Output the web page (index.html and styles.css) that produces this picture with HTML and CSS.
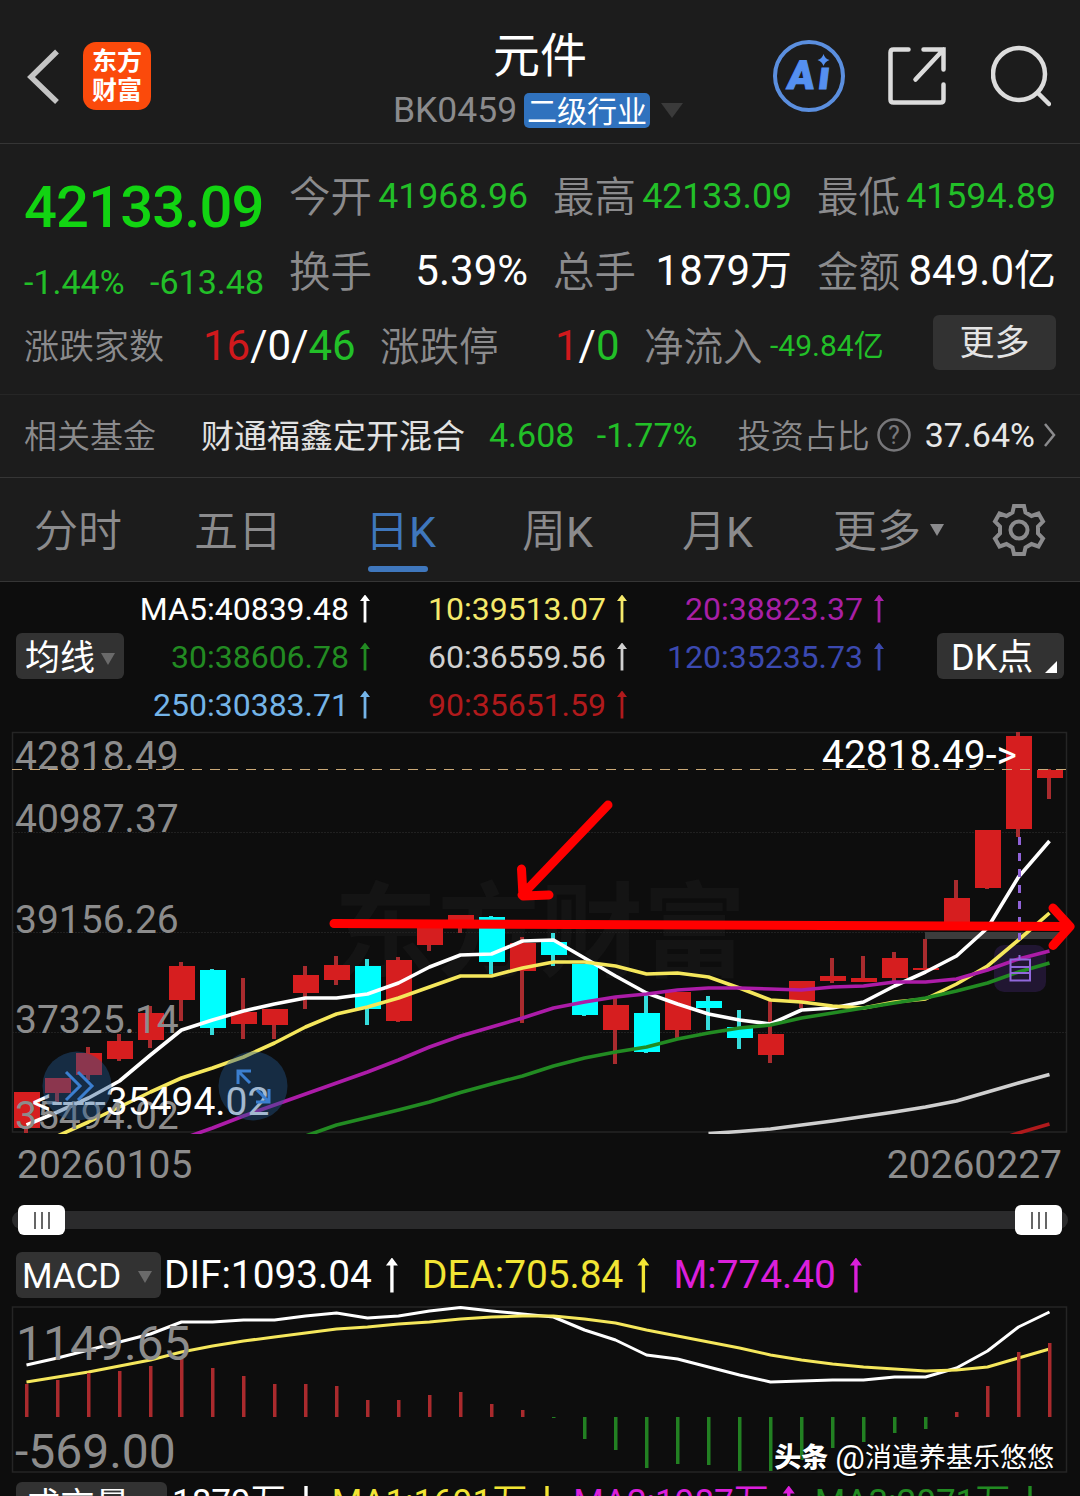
FILE: index.html
```html
<!DOCTYPE html>
<html lang="zh-CN">
<head>
    <meta charset="UTF-8">
    <meta name="viewport" content="width=device-width, initial-scale=1.0">
    <title>元件 BK0459</title>
    <link rel="stylesheet" href="styles.css">
</head>
<body>
    <div class="app">
        <header class="header">
            <div class="header-left">
                <svg class="back" width="34" height="58" viewBox="0 0 34 58"><path d="M30 4.500 4 30l26 25"/></svg>
                <div class="logo"><span>东方</span><span>财富</span></div>
            </div>
            <div class="header-title">
                <h1>元件</h1>
                <div class="subtitle">
                    <span class="code">BK0459</span>
                    <span class="badge">二级行业</span>
                    <i class="caret caret-title"></i>
                </div>
            </div>
            <div class="header-right">
                <svg width="72" height="72" viewBox="0 0 72 72">
                    <circle cx="36" cy="36" r="34" fill="none" stroke="#5b8fdf" stroke-width="4"/>
                    <text x="19" y="49" class="ai-text">A<tspan x="50">ı</tspan></text>
                    <path d="M50.500 14q1.500 5 6 6-4.500 1.500-6 6-1.500-4.500-6-6 4.500-1 6-6z" fill="#5590f0"/>
                </svg>
                <svg class="line-icon" width="60" height="60" viewBox="0.500 -0.500 60 60"><path d="M21 3H6Q3 3 3 6v47q0 3 3 3h47q3 0 3-3V38M36 3h20v20M56 3 28 33"/></svg>
                <svg class="line-icon" width="60" height="62" viewBox="0 0 60 62"><circle cx="28" cy="29" r="26"/><path d="m47 48 11 11"/></svg>
            </div>
        </header>

        <section class="quote">
            <div class="quote-top">
                <div class="price-box">
                    <div class="price">42133.09</div>
                    <div class="change"><span>-1.44%</span><span>-613.48</span></div>
                </div>
                <div class="stats">
                    <div class="stat"><label>今开</label><b class="green">41968.96</b></div>
                    <div class="stat"><label>最高</label><b class="green">42133.09</b></div>
                    <div class="stat"><label>最低</label><b class="green">41594.89</b></div>
                    <div class="stat big"><label>换手</label><b>5.39%</b></div>
                    <div class="stat big"><label>总手</label><b>1879万</b></div>
                    <div class="stat big"><label>金额</label><b>849.0亿</b></div>
                </div>
            </div>
            <div class="breadth">
                <label class="l1">涨跌家数</label>
                <span class="n1"><span class="red">16</span>/0/<span class="green">46</span></span>
                <label class="l2">涨跌停</label>
                <span class="n2"><span class="red">1</span>/<span class="green">0</span></span>
                <label class="l3">净流入</label>
                <span class="flow green">-49.84亿</span>
                <button class="more">更多</button>
            </div>
        </section>

        <section class="fund">
            <label>相关基金</label>
            <span class="fund-name">财通福鑫定开混合</span>
            <span class="fund-value green">4.608</span>
            <span class="fund-change green">-1.77%</span>
            <label>投资占比</label>
            <svg class="help" width="34" height="34" viewBox="0 0 34 34"><circle cx="17" cy="17" r="15.500"/><text x="17" y="25.500">?</text></svg>
            <span class="ratio">37.64%</span>
            <svg class="arrow-right" width="12" height="26" viewBox="0 0 12 26"><path d="m1 2 9 11-9 11"/></svg>
        </section>

        <nav class="tabs">
            <a>分时</a>
            <a>五日</a>
            <a class="active">日<b>K</b></a>
            <a>周<b>K</b></a>
            <a>月<b>K</b></a>
            <a>更多<i class="caret caret-tab"></i></a>
            <svg class="gear" width="54" height="54" viewBox="0 0 54 54">
                <path d="M22 3h10l1.500 6.500 6 3.500 7-2.500 4.500 8-5 5v7l5 5-4.500 8-7-2.500-6 3.500L32 51H22l-1.500-6.500-6-3.500-7 2.500-4.500-8 5-5v-7l-5-5 4.500-8 7 2.500 6-3.500z"/>
                <circle cx="27" cy="27" r="8.500"/>
            </svg>
        </nav>

        <section class="ma">
            <button class="chip">均线<i class="caret"></i></button>
            <div class="ma-grid">
                <span class="up">MA5:40839.48</span>
                <span class="up yellow">10:39513.07</span>
                <span class="up purple">20:38823.37</span>
                <span class="up dgreen">30:38606.78</span>
                <span class="up silver">60:36559.56</span>
                <span class="up blue">120:35235.73</span>
                <span class="up sky">250:30383.71</span>
                <span class="up dred">90:35651.59</span>
            </div>
            <button class="chip chip-dk">DK点<i class="corner"></i></button>
        </section>

        <svg class="chart" id="kline" width="1080" height="404" viewBox="0 730 1080 404">
            <text class="watermark" x="334" y="969">东方财富</text>
            <path class="grid" d="M12 832.500h1055M12 932.500h1055M12 1032.500h1055"/>
            <rect class="frame" x="12.500" y="732.500" width="1054" height="399.500"/>
            <path d="M925 932h137v7H925z" fill="#3c3c3c"/>
            <g id="candles"></g>
            <rect x="994" y="945" width="52" height="47" rx="10" fill="#3a2260" fill-opacity=".45"/>
            <g id="averages"></g>
            <path class="price-line" d="M12 769.500h1055"/>
            <path class="event-line" d="M1019.500 837v103"/>
            <path class="event-icon" d="M1010.500 959.500h19.500v21h-19.500zM1010.500 967h19.500M1010.500 973h19.500M1019.500 955v4"/>
            <g class="axis">
                <text x="15" y="769">42818.49</text>
                <text x="15" y="832">40987.37</text>
                <text x="15" y="933">39156.26</text>
                <text x="15" y="1033">37325.14</text>
                <text x="15" y="1129">35494.02</text>
            </g>
            <g class="extreme">
                <text x="822" y="768">42818.49-&gt;</text>
                <text x="32" y="1115">&lt;-----35494.02</text>
            </g>
            <circle cx="77" cy="1086" r="34.500" class="round"/>
            <circle cx="253" cy="1086" r="34.500" class="round"/>
            <path class="round-icon" d="m66 1072 14 14-14 14M78 1072l14 14-14 14M238 1084v-13h13M238 1071l12 12M269 1089v13h-13M269 1102l-12-12"/>
            <g class="marker">
                <path d="M334 923.500 1069 926.500M1053 908l17 18.500-17 19"/>
                <path d="M608 805 522 895M521.500 869l1.500 27 26-1"/>
            </g>
        </svg>

        <div class="dates"><span>20260105</span><span>20260227</span></div>

        <div class="slider">
            <div class="handle"><i></i><i></i><i></i></div>
            <div class="handle"><i></i><i></i><i></i></div>
        </div>

        <div class="indicator">
            <button class="chip">MACD<i class="caret"></i></button>
            <span class="up">DIF:1093.04</span>
            <span class="up bright-yellow">DEA:705.84</span>
            <span class="up magenta">M:774.40</span>
        </div>

        <svg class="chart" width="1080" height="168" viewBox="0 1306 1080 168">
            <rect class="frame" x="12.500" y="1307" width="1054" height="165"/>
            <g id="macd"></g>
            <g class="axis axis-big">
                <text x="16" y="1360">1149.65</text>
                <text x="15" y="1467.500">-569.00</text>
            </g>
        </svg>

        <div class="indicator volume">
            <button class="chip">成交量<i class="caret"></i></button>
            <span class="down">1879万</span>
            <span class="down bright-yellow">MA1:1691万</span>
            <span class="up magenta">MA2:1987万</span>
            <span class="down dgreen">MA3:2071万</span>
        </div>

        <div class="credit"><b>头条</b><span class="at">@</span>消遣养基乐悠悠</div>
    </div>

    <script>
        const STEP = 31;
        const START = 27;
        const SVG = 'http://www.w3.org/2000/svg';

        // [body top, body bottom, high, low, 1 = falling]
        const candles = [
            [1092, 1128, 1092, 1133], [1078, 1093, 1078, 1102], [1053, 1075, 1047, 1080],
            [1041, 1059, 1034, 1061], [1013, 1040, 1006, 1048], [966, 1000, 962, 1021],
            [970, 1028, 969, 1035, 1], [1012, 1024, 978, 1039], [1009, 1025, 1009, 1039],
            [975, 993, 966, 1009], [965, 980, 956, 985], [966, 1009, 959, 1025, 1],
            [960, 1021, 957, 1022], [922, 945, 922, 951], [915, 926, 915, 933],
            [917, 962, 916, 974, 1], [943, 971, 937, 1023], [942, 955, 933, 966, 1],
            [964, 1015, 964, 1016, 1], [1005, 1030, 998, 1064], [1013, 1052, 993, 1053, 1],
            [992, 1030, 992, 1038], [1001, 1008, 996, 1030, 1], [1027, 1038, 1010, 1049, 1],
            [1034, 1055, 1001, 1063], [981, 1001, 981, 1008], [976, 981, 958, 983],
            [978, 982, 956, 982], [958, 978, 952, 981], [968, 970, 939, 970],
            [898, 924, 880, 924], [830, 888, 830, 889], [736, 829, 732, 837],
            [770, 778, 769, 799]
        ];

        // moving averages, each one ends on the last day
        const ma5 = [1125, 1112, 1098, 1081, 1055, 1030, 1020, 1011, 1004, 998, 998, 994, 983, 967, 955, 954, 941, 940, 958, 976, 993, 1004, 1014, 1020, 1024, 1010, 1008, 1002, 986, 972, 956, 928, 877, 841];
        const ma10 = [1150, 1136, 1122, 1107, 1092, 1078, 1068, 1057, 1043, 1027, 1014, 1007, 998, 987, 976, 976, 968, 962, 962, 966, 974, 973, 977, 988, 1000, 1002, 1006, 1008, 1002, 999, 984, 966, 940, 913];
        const ma20 = [1192, 1181, 1170, 1160, 1149, 1139, 1128, 1116, 1105, 1094, 1083, 1072, 1060, 1047, 1036, 1027, 1018, 1008, 1002, 997, 994, 990, 988, 988, 989, 990, 987, 986, 982, 982, 979, 970, 959, 951];
        const ma30 = [1228, 1218, 1207, 1197, 1187, 1177, 1167, 1156, 1146, 1136, 1125, 1117.5, 1110, 1102, 1092.500, 1084, 1076, 1066, 1058, 1052, 1047, 1039, 1033, 1028, 1025, 1018, 1013, 1008, 1003, 998, 991, 983, 972, 963];
        const ma60 = [1133.500, 1131.500, 1129, 1125, 1121, 1116.500, 1112, 1107, 1101, 1092, 1083, 1074.500];
        const ma90 = [1143, 1133, 1124];

        const dif = [1365, 1358, 1350, 1342, 1334, 1322, 1322, 1320, 1320, 1316, 1313, 1318, 1316, 1311, 1307.500, 1311, 1314, 1317, 1330, 1340, 1355, 1359, 1367, 1375, 1382, 1381, 1380, 1380, 1377, 1377, 1368, 1351, 1327, 1312];
        const dea = [1382, 1377, 1372, 1366, 1360, 1352, 1346, 1341, 1337, 1333, 1329, 1327, 1324, 1322, 1319, 1317, 1316, 1316, 1319, 1323, 1330, 1336, 1342, 1348, 1355, 1360, 1364, 1367, 1369, 1371, 1370, 1367, 1358, 1349];
        const bars = [1384, 1380, 1373, 1371, 1366, 1359, 1368, 1376, 1384, 1384, 1386, 1400, 1400, 1395, 1392, 1404, 1410, 1418, 1439, 1450, 1468, 1464, 1465, 1471, 1471, 1460, 1448, 1442, 1433, 1429, 1412, 1386, 1352, 1343];
        const ZERO = 1417;

        function add(parent, name, attrs) {
            const el = document.createElementNS(SVG, name);
            for (const key in attrs) {
                el.setAttribute(key, attrs[key]);
            }
            parent.appendChild(el);
        }

        function line(parent, values, className) {
            const first = 34 - values.length;
            const points = values.map((y, i) => (START - 0.5 + (first + i) * STEP) + ',' + y).join(' ');
            add(parent, 'polyline', { points: points, class: className });
        }

        const candleGroup = document.getElementById('candles');
        candles.forEach(function([top, bottom, high, low, falling], i) {
            const x = START + i * STEP;
            const name = falling ? 'fall' : 'rise';
            add(candleGroup, 'rect', { x: x - 3, y: high, width: 4, height: low - high, class: name + ' wick' });
            add(candleGroup, 'rect', { x: x - 13, y: top, width: 26, height: bottom - top, class: name });
        });

        const averages = document.getElementById('averages');
        line(averages, ma5, 'line-white');
        line(averages, ma10, 'line-yellow');
        line(averages, ma20, 'line-purple');
        line(averages, ma30, 'line-green');
        line(averages, ma60, 'line-silver');
        line(averages, ma90, 'line-red');

        const macd = document.getElementById('macd');
        line(macd, dif, 'line-white thin');
        line(macd, dea, 'line-yellow thin');
        bars.forEach(function(y, i) {
            add(macd, 'rect', {
                x: START - 2 + i * STEP,
                y: Math.min(y, ZERO),
                width: 3.5,
                height: Math.abs(y - ZERO),
                class: y < ZERO ? 'bar-up' : 'bar-down'
            });
        });
    </script>
</body>
</html>
```

FILE: styles.css
```css
/* General Styles */
* {
    box-sizing: border-box;
}

body {
    margin: 0;
    background: #0d0d0d;
    color: #fff;
    font-family: Roboto, 'Noto Sans CJK SC', sans-serif;
    line-height: 1.2;
}

.app {
    position: relative;
    width: 1080px;
    height: 1496px;
    overflow: hidden;
    white-space: nowrap;
}

button {
    border: none;
    padding: 0;
    color: #fff;
    font-family: inherit;
}

label {
    color: #8b8b8d;
    font-weight: 350;
}

svg {
    display: block;
    flex: none;
}

.green { color: #22bf28; }
.red { color: #d0191c; }
.yellow { color: #f5e96b; }
.bright-yellow { color: #f2e534; }
.purple { color: #a81fa5; }
.magenta { color: #db1fdb; }
.dgreen { color: #228b22; }
.silver { color: #d0d0d0; }
.blue { color: #3b49b0; }
.sky { color: #74b4e8; }
.dred { color: #b01a1c; }

.caret {
    display: inline-block;
    border: 7px solid transparent;
    border-top: 12px solid #6a6a6a;
    border-bottom: 0;
}

/* Header */
.header {
    display: grid;
    grid-template-columns: 300px 1fr 300px;
    height: 144px;
    background: #1c1c1c;
    border-bottom: 1px solid #353535;
}

.header-left {
    display: flex;
    align-items: center;
    gap: 22px;
    padding: 9px 0 0 27px;
}

.back path {
    fill: none;
    stroke: #c4c4c4;
    stroke-width: 5.5;
}

.logo {
    display: flex;
    flex-direction: column;
    justify-content: center;
    width: 68px;
    height: 68px;
    border-radius: 13px;
    background: #fb4a0b;
    font-size: 25px;
    font-weight: 700;
    line-height: 29px;
    text-align: center;
}

.header-title {
    display: flex;
    flex-direction: column;
    align-items: center;
}

h1 {
    margin: 28px 0 0;
    font-size: 47px;
    font-weight: 400;
    line-height: 56px;
}

.subtitle {
    display: flex;
    align-items: center;
    height: 53px;
    margin-left: -4px;
}

.code {
    color: #8b8b8d;
    font-size: 35.5px;
}

.badge {
    height: 35px;
    margin-left: 7px;
    padding: 0 3px;
    border-radius: 5px;
    background: #3072be;
    font-size: 30px;
    line-height: 37px;
}

.caret-title {
    margin: 0 0 0 11px;
    border-width: 15px 11px 0;
    border-top-color: #3a3a3a;
}

.header-right {
    display: flex;
    align-items: center;
    justify-content: flex-end;
    gap: 43px;
    padding: 9px 29px 0 0;
}

.line-icon {
    fill: none;
    stroke: #dcdcdc;
    stroke-width: 4.5;
    stroke-linecap: round;
}

.ai-text {
    fill: #5590f0;
    stroke: #5590f0;
    stroke-width: 1;
    font-size: 40px;
    font-weight: 900;
    transform: skewX(-7deg);
}

/* Quote */
.quote {
    height: 250px;
    background: #1c1c1c;
}

.quote-top {
    display: flex;
    height: 165px;
    padding-left: 24px;
}

.price-box {
    width: 265px;
}

.price {
    margin-top: 27px;
    color: #12d412;
    font-size: 58px;
    font-weight: 500;
    letter-spacing: -0.9px;
    line-height: 72px;
}

.change {
    display: flex;
    justify-content: space-between;
    width: 240px;
    margin-top: 18px;
    color: #22bf28;
    font-size: 34px;
    line-height: 42px;
}

.stats {
    display: grid;
    grid-template-columns: 239px 239px 239px;
    grid-template-rows: 75px 75px;
    column-gap: 25px;
    margin-top: 15px;
}

.stat {
    display: flex;
    align-items: center;
    justify-content: space-between;
    font-size: 35.7px;
}

.stat label {
    padding-top: 3px;
    font-size: 41.5px;
}

.stat b {
    font-weight: 400;
}

.stat.big {
    font-size: 42px;
}

.breadth {
    display: flex;
    align-items: center;
    height: 72px;
    padding: 2px 0 0 24px;
    font-size: 42px;
}

.breadth label {
    padding-top: 4px;
}

.breadth .l1 {
    width: 179px;
    font-size: 35px;
}

.breadth .n1 {
    width: 177px;
}

.breadth .l2, .breadth .l3 {
    font-size: 39.5px;
}

.breadth .l2 {
    width: 175px;
}

.breadth .n2 {
    width: 89px;
}

.breadth .l3 {
    width: 126px;
}

.flow {
    width: 163px;
    font-size: 30px;
}

.more {
    width: 123px;
    height: 55px;
    margin-top: -7px;
    border-radius: 6px;
    background: #323232;
    color: #e4e4e4;
    font-size: 35px;
    line-height: 58px;
}

/* Related fund */
.fund {
    display: flex;
    align-items: center;
    height: 84px;
    padding: 0 24px 2px;
    background: #1c1c1c;
    border-top: 1px solid #262626;
    border-bottom: 1px solid #353535;
    font-size: 34px;
}

.fund label, .fund-name {
    padding-top: 3px;
    font-size: 33px;
}

.fund-name {
    margin: 0 24px 0 45px;
    color: #e2e2e2;
}

.fund-value {
    width: 108px;
}

.fund-change {
    width: 141px;
}

.help {
    margin: 0 14px 0 7px;
}

.help circle {
    fill: none;
    stroke: #77777a;
    stroke-width: 2.5;
}

.help text {
    fill: #77777a;
    font-size: 25px;
    text-anchor: middle;
}

.ratio {
    color: #e8e8e8;
}

.arrow-right {
    margin-left: 9px;
}

.arrow-right path {
    fill: none;
    stroke: #8b8b8d;
    stroke-width: 2.5;
}

/* Tabs */
.tabs {
    display: grid;
    grid-template-columns: 160px 171px 157px 160px 151px 159px 54px;
    align-items: center;
    height: 104px;
    padding-left: 34px;
    background: #1c1c1c;
    border-bottom: 1px solid #353535;
    color: #8b8b8d;
    font-size: 44px;
    font-weight: 350;
}

.tabs a {
    padding-top: 5px;
    line-height: 64px;
}

.tabs b {
    font-size: 43px;
    font-weight: 400;
}

.tabs .active {
    position: relative;
    color: #3f77bd;
}

.tabs .active::after {
    content: '';
    position: absolute;
    left: 3px;
    bottom: -8px;
    width: 60px;
    height: 6px;
    border-radius: 3px;
    background: #3f77bd;
}

.caret-tab {
    margin-left: 9px;
    border-top-color: #8b8b8d;
    vertical-align: 11px;
}

.gear {
    fill: none;
    stroke: #8b8b8d;
    stroke-width: 4;
}

/* Moving averages */
.ma {
    display: flex;
    align-items: center;
    height: 148px;
    padding: 0 16px;
}

.chip {
    display: flex;
    align-items: center;
    justify-content: space-between;
    width: 108px;
    height: 46px;
    padding: 5px 9px 0;
    border-radius: 6px;
    background: #323232;
    font-size: 35px;
    line-height: 46px;
}

.chip-dk {
    position: relative;
    width: 127px;
    margin-left: auto;
    padding-top: 3px;
    padding-left: 14px;
    font-size: 36px;
}

.corner {
    position: absolute;
    right: 7px;
    bottom: 6px;
    border-left: 12px solid transparent;
    border-bottom: 12px solid #fff;
}

.ma-grid {
    display: grid;
    grid-template-columns: 246px 257px 257px;
    grid-auto-rows: 48px;
    padding-top: 1px;
    font-size: 32px;
    line-height: 48px;
}

.ma-grid span {
    display: flex;
    align-items: center;
    justify-content: flex-end;
}

/* Thin arrow after a value */
.up::after, .down::after {
    content: '';
    flex: none;
    width: 10px;
    height: 28px;
    margin-left: 11px;
    background: currentColor;
    clip-path: polygon(50% 0, 100% 23%, 64% 23%, 64% 100%, 36% 100%, 36% 23%, 0 23%);
}

.down::after {
    transform: rotate(180deg);
}

/* Charts */
.frame {
    fill: none;
    stroke: #252525;
    stroke-width: 1.5;
}

.grid {
    stroke: #202020;
    stroke-dasharray: 2 1;
}

.watermark {
    fill: #141414;
    font-size: 103px;
    font-weight: 700;
}

.rise { fill: #d61e1f; }
.rise.wick { fill: #a92b2e; }
.fall { fill: #00ffff; }
.fall.wick { fill: #36dcdc; }

polyline {
    fill: none;
    stroke-width: 3.6;
    stroke-linejoin: round;
}

.thin { stroke-width: 3; }
.line-white { stroke: #fff; }
.line-yellow { stroke: #f5e75c; }
.line-purple { stroke: #ac1ca8; }
.line-green { stroke: #228b22; }
.line-silver { stroke: #cfcfcf; }
.line-red { stroke: #b01a1c; }
.bar-up { fill: #aa2a2d; }
.bar-down { fill: #228022; }

.price-line {
    stroke: #cba978;
    stroke-width: 1.2;
    stroke-dasharray: 10 8;
}

.event-line {
    stroke: #9163d8;
    stroke-width: 3;
    stroke-dasharray: 8 8;
}

.event-icon {
    fill: none;
    stroke: #9168dc;
    stroke-width: 2;
}

.axis text {
    fill: #8c8c8c;
    font-size: 39px;
}

.axis-big text {
    font-size: 48px;
}

.extreme text {
    fill: #fff;
    font-size: 39px;
}

.round {
    fill: #24588f;
    fill-opacity: .42;
}

.round-icon {
    fill: none;
    stroke: #3b7fd0;
    stroke-width: 3;
}

.marker path {
    fill: none;
    stroke: #ff0000;
    stroke-width: 9;
    stroke-linecap: round;
    stroke-linejoin: round;
}

/* Date range */
.dates {
    display: flex;
    justify-content: space-between;
    height: 71px;
    padding: 1px 18px 0 17px;
    color: #8c8c8c;
    font-size: 39px;
    line-height: 61px;
}

.slider {
    display: flex;
    align-items: center;
    justify-content: space-between;
    height: 18px;
    margin: 6px 12px 0;
    padding: 0 6px;
    border-radius: 9px;
    background: #2b2b2c;
}

.handle {
    display: flex;
    align-items: center;
    justify-content: center;
    gap: 5px;
    width: 47px;
    height: 30px;
    border-radius: 6px;
    background: #fff;
}

.handle i {
    width: 2px;
    height: 17px;
    background: #666;
}

/* Indicators */
.indicator {
    display: flex;
    align-items: center;
    height: 46px;
    margin: 23px 0 8px;
    padding-left: 16px;
    font-size: 38.8px;
}

.indicator .chip {
    width: 145px;
    margin-right: 3px;
    padding-top: 3px;
    padding-left: 6px;
}

.indicator span {
    display: flex;
    align-items: center;
    margin-right: 24px;
}

.indicator .up::after, .indicator .down::after {
    width: 12px;
    height: 35px;
    margin-left: 14px;
}

.volume {
    margin: 8px 0 0;
    font-size: 35px;
}

.volume .chip {
    width: 151px;
    margin-right: 5px;
    padding-left: 9px;
}

.volume span {
    margin-right: 20px;
    padding-bottom: 4px;
}

/* Author mark */
.credit {
    display: flex;
    align-items: center;
    position: absolute;
    right: 26px;
    bottom: 17px;
    font-size: 27px;
    line-height: 42px;
    text-shadow: 1px 1px 2px #000;
}

.credit b {
    margin-right: 7px;
    font-weight: 900;
}

.at {
    font-size: 33px;
}
```
